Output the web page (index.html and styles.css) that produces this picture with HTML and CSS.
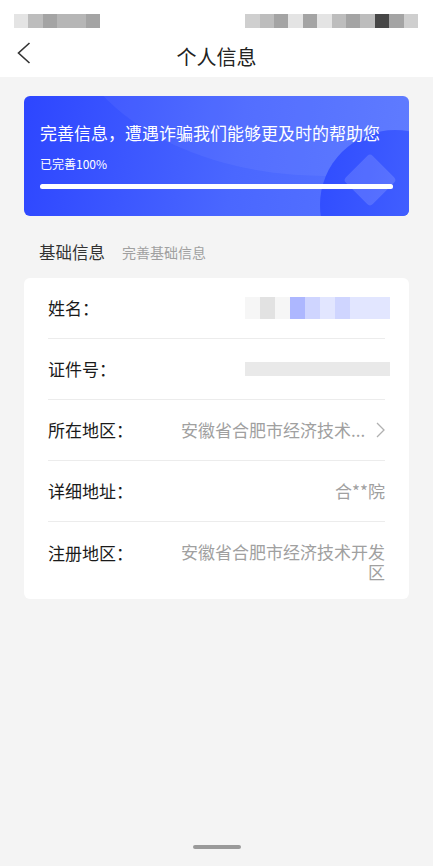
FILE: index.html
```html
<!DOCTYPE html>
<html lang="zh-CN">

<head>
    <meta charset="UTF-8">
    <meta name="viewport" content="width=device-width, initial-scale=1.0">
    <title>个人信息</title>
    <link rel="stylesheet" href="styles.css">
</head>

<body>
    <div class="page">
        <div class="top">
            <!-- status bar (blurred in the capture) -->
            <div class="status">
                <div class="mosaic">
                    <span class="g1"></span><span class="g3"></span><span class="g5"></span>
                    <span class="g4"></span><span class="g4"></span><span class="g5"></span>
                </div>
                <div class="mosaic">
                    <span class="g2"></span><span class="g3"></span><span class="g5"></span>
                    <span class="g1"></span><span class="g5"></span><span class="g1"></span>
                    <span class="g3"></span><span class="g5"></span><span class="g3"></span>
                    <span class="g7"></span><span class="g5"></span><span class="g2"></span>
                </div>
            </div>
            <div class="nav">
                <svg class="back" width="14" height="22" viewBox="0 0 14 22">
                    <polyline points="12.5,1 1.5,11 12.5,21" fill="none" stroke="#333" stroke-width="1.6" />
                </svg>
                <h1>个人信息</h1>
            </div>
        </div>

        <div class="banner">
            <div class="banner-circle"></div>
            <div class="banner-diamond"></div>
            <p class="banner-title">完善信息，遭遇诈骗我们能够更及时的帮助您</p>
            <p class="banner-sub">已完善100%</p>
            <div class="progress"><div class="progress-fill"></div></div>
        </div>

        <div class="section-head">
            <span class="section-title">基础信息</span>
            <span class="section-hint">完善基础信息</span>
        </div>

        <div class="card">
            <div class="row">
                <span class="label">姓名：</span>
                <div class="blur-name">
                    <span class="b1"></span><span class="b2"></span><span class="b1"></span>
                    <span class="b3"></span><span class="b4"></span><span class="b5"></span>
                    <span class="b4"></span><span class="b5"></span>
                </div>
            </div>
            <div class="row">
                <span class="label">证件号：</span>
                <div class="blur-id"></div>
            </div>
            <div class="row">
                <span class="label">所在地区：</span>
                <span class="value short">安徽省合肥市经济技术...</span>
                <svg class="arrow" width="9" height="16" viewBox="0 0 9 16">
                    <polyline points="1,1 8,8 1,15" fill="none" stroke="#b0b0b0" stroke-width="1.3" />
                </svg>
            </div>
            <div class="row">
                <span class="label">详细地址：</span>
                <span class="value">合**院</span>
            </div>
            <div class="row row-last">
                <span class="label">注册地区：</span>
                <span class="value multi">安徽省合肥市经济技术开发区</span>
            </div>
        </div>

        <div class="spacer"></div>
        <div class="home-bar"></div>
    </div>
</body>

</html>
```

FILE: styles.css
```css
* {
    margin: 0;
    padding: 0;
    box-sizing: border-box;
}

body {
    font-family: "Noto Sans CJK SC", "Noto Sans", sans-serif;
    background: #f4f4f4;
    color: #1a1a1a;
}

.page {
    width: 433px;
    height: 866px;
    display: flex;
    flex-direction: column;
    overflow: hidden;
}

/* Header */
.top {
    background: #fff;
}

.status {
    height: 38px;
    display: flex;
    justify-content: space-between;
    padding: 14px 15px 0 14px;
}

.mosaic {
    display: flex;
    height: 14px;
}

.mosaic span {
    width: 14.4px;
    height: 14px;
}

.g1 { background: #e4e4e4; }
.g2 { background: #cfcfcf; }
.g3 { background: #bdbdbd; }
.g4 { background: #b6b6b6; }
.g5 { background: #a4a4a4; }
.g7 { background: #474747; }

.nav {
    height: 39px;
    display: flex;
    align-items: center;
    justify-content: center;
    position: relative;
}

.nav .back {
    position: absolute;
    left: 17px;
    top: 4px;
}

.nav h1 {
    font-size: 20px;
    font-weight: 400;
    color: #222;
    line-height: 28px;
    margin-top: -2px;
}

/* Blue banner */
.banner {
    position: relative;
    overflow: hidden;
    margin: 19px 24px 0;
    height: 120px;
    border-radius: 6px;
    padding: 25px 16px 0;
    color: #fff;
    background: linear-gradient(100deg, #2d46ff 0%, #4a67ff 55%, #5875ff 100%);
}

.banner::before {
    content: "";
    position: absolute;
    left: 40px;
    top: -260px;
    width: 520px;
    height: 340px;
    border-radius: 50%;
    background: rgba(255, 255, 255, 0.05);
}

.banner-circle {
    position: absolute;
    left: 296px;
    top: 34px;
    width: 150px;
    height: 150px;
    border-radius: 50%;
    background: linear-gradient(100deg, #2f4cff, #4d6bff);
}

.banner-diamond {
    position: absolute;
    left: 327px;
    top: 65px;
    width: 38px;
    height: 38px;
    border-radius: 4px;
    transform: rotate(45deg);
    background: rgba(255, 255, 255, 0.14);
}

.banner-title {
    position: relative;
    font-size: 17px;
    line-height: 24px;
    white-space: nowrap;
}

.banner-sub {
    position: relative;
    font-size: 12px;
    line-height: 16px;
    margin-top: 11px;
}

.progress {
    position: relative;
    margin-top: 12px;
    height: 5px;
    border-radius: 3px;
    background: rgba(255, 255, 255, 0.3);
}

.progress-fill {
    width: 100%;
    height: 100%;
    border-radius: 3px;
    background: #fff;
}

/* Section title */
.section-head {
    display: flex;
    align-items: center;
    margin: 25px 0 15px 39px;
    height: 22px;
}

.section-title {
    font-size: 16.5px;
    color: #333;
}

.section-hint {
    margin-left: 17px;
    font-size: 14px;
    color: #a0a0a0;
}

/* Info card */
.card {
    margin: 0 24px;
    padding: 0 24px;
    background: #fff;
    border-radius: 6px;
}

.row {
    display: flex;
    align-items: center;
    padding: 19px 0;
    line-height: 22px;
    border-bottom: 1px solid #ececec;
}

.row-last {
    align-items: flex-start;
    padding: 20px 0 17px;
    border-bottom: none;
}

.label {
    flex-shrink: 0;
    font-size: 17px;
    color: #1a1a1a;
    width: 133px;
}

.value {
    flex: 1;
    min-width: 0;
    text-align: right;
    font-size: 17px;
    color: #a0a0a0;
}

.short {
    white-space: nowrap;
    margin-right: 11px;
}

.multi {
    line-height: 20px;
}

.arrow {
    flex-shrink: 0;
}

/* Masked values */
.blur-name {
    margin-left: auto;
    margin-right: -5px;
    display: flex;
    height: 22px;
}

.blur-name span {
    width: 15px;
    height: 22px;
}

.blur-name span:last-child {
    width: 40px;
}

.b1 { background: #f6f6f6; }
.b2 { background: #e2e2e2; }
.b3 { background: #adb7ff; }
.b4 { background: #cfd5ff; }
.b5 { background: #e2e6ff; }

.blur-id {
    margin-left: auto;
    margin-right: -5px;
    width: 145px;
    height: 14px;
    background: #e9e9e9;
}

.spacer {
    flex: 1;
}

.home-bar {
    align-self: center;
    width: 48px;
    height: 4px;
    border-radius: 2px;
    background: #9a9a9a;
    margin-bottom: 17px;
}
```
